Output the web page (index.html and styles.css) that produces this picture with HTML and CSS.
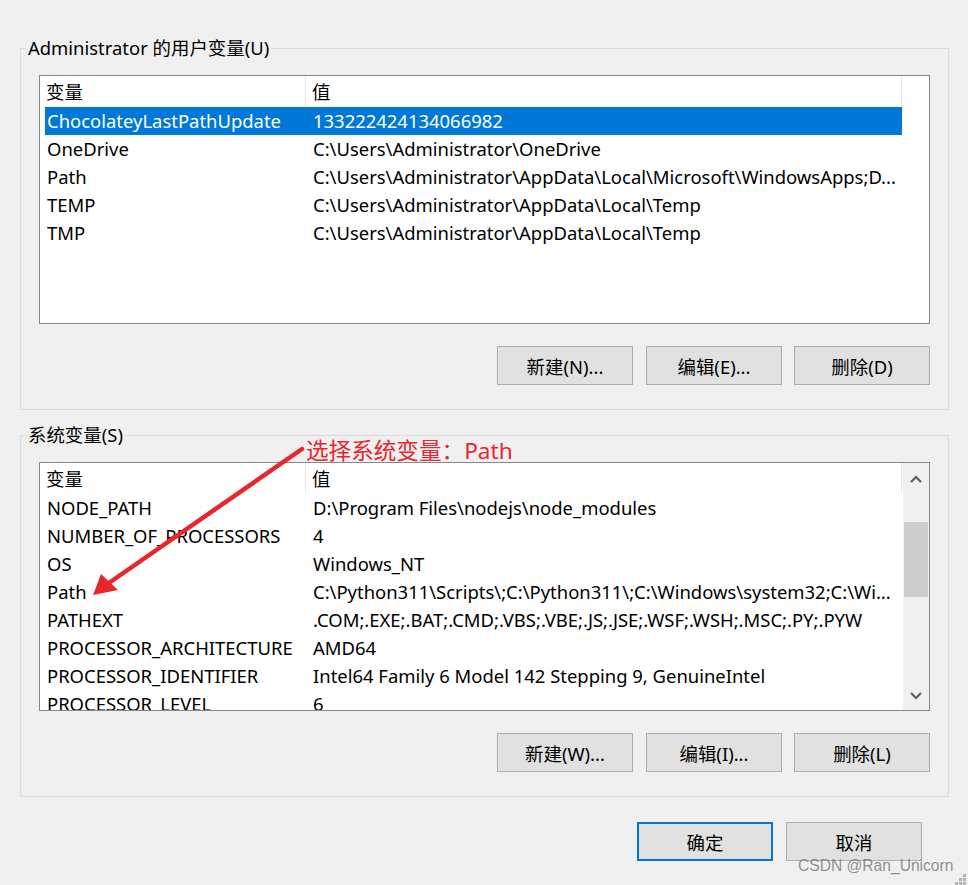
FILE: index.html
```html
<!DOCTYPE html>
<html lang="zh-CN">
<head>
<meta charset="utf-8">
<title>环境变量</title>
<link rel="stylesheet" href="styles.css">
</head>
<body>
<div class="window">
  <section class="group">
    <div class="group-title">Administrator 的用户变量(U)</div>
    <div class="list">
      <div class="list-body">
        <div class="row header"><div class="c1">变量</div><div class="c2">值</div></div>
        <div class="row selected"><div class="c1">ChocolateyLastPathUpdate</div><div class="c2">133222424134066982</div></div>
        <div class="row"><div class="c1">OneDrive</div><div class="c2">C:\Users\Administrator\OneDrive</div></div>
        <div class="row"><div class="c1">Path</div><div class="c2">C:\Users\Administrator\AppData\Local\Microsoft\WindowsApps;D...</div></div>
        <div class="row"><div class="c1">TEMP</div><div class="c2">C:\Users\Administrator\AppData\Local\Temp</div></div>
        <div class="row"><div class="c1">TMP</div><div class="c2">C:\Users\Administrator\AppData\Local\Temp</div></div>
      </div>
    </div>
    <div class="buttons">
      <div class="btn">新建(N)...</div>
      <div class="btn">编辑(E)...</div>
      <div class="btn">删除(D)</div>
    </div>
  </section>

  <section class="group group-sys">
    <div class="group-title">系统变量(S)</div>
    <div class="list">
      <div class="list-body">
        <div class="row header"><div class="c1">变量</div><div class="c2">值</div></div>
        <div class="row"><div class="c1">NODE_PATH</div><div class="c2">D:\Program Files\nodejs\node_modules</div></div>
        <div class="row"><div class="c1">NUMBER_OF_PROCESSORS</div><div class="c2">4</div></div>
        <div class="row"><div class="c1">OS</div><div class="c2">Windows_NT</div></div>
        <div class="row"><div class="c1">Path</div><div class="c2">C:\Python311\Scripts\;C:\Python311\;C:\Windows\system32;C:\Wi...</div></div>
        <div class="row"><div class="c1">PATHEXT</div><div class="c2">.COM;.EXE;.BAT;.CMD;.VBS;.VBE;.JS;.JSE;.WSF;.WSH;.MSC;.PY;.PYW</div></div>
        <div class="row"><div class="c1">PROCESSOR_ARCHITECTURE</div><div class="c2">AMD64</div></div>
        <div class="row"><div class="c1">PROCESSOR_IDENTIFIER</div><div class="c2">Intel64 Family 6 Model 142 Stepping 9, GenuineIntel</div></div>
        <div class="row"><div class="c1">PROCESSOR_LEVEL</div><div class="c2">6</div></div>
      </div>
      <div class="scrollbar">
        <div class="sb-btn sb-up"><svg width="12" height="8" viewBox="0 0 12 8"><path d="M1 7 L6 2 L11 7" fill="none" stroke="#606060" stroke-width="2.2"/></svg></div>
        <div class="sb-track"><div class="sb-thumb"></div></div>
        <div class="sb-btn sb-down"><svg width="12" height="8" viewBox="0 0 12 8"><path d="M1 1 L6 6 L11 1" fill="none" stroke="#606060" stroke-width="2.2"/></svg></div>
      </div>
    </div>
    <div class="buttons">
      <div class="btn">新建(W)...</div>
      <div class="btn">编辑(I)...</div>
      <div class="btn">删除(L)</div>
    </div>
  </section>

  <div class="footer">
    <div class="btn primary">确定</div>
    <div class="btn">取消</div>
  </div>

  <svg class="arrow" width="968" height="885" viewBox="0 0 968 885">
    <line x1="302" y1="449" x2="106" y2="585" stroke="#e8262e" stroke-width="4.5" stroke-linecap="round"/>
    <polygon points="93,595 101,574 118,590" fill="#e8262e"/>
  </svg>
  <div class="annotation">选择系统变量：Path</div>
  <div class="watermark">CSDN @Ran_Unicorn</div>
  <svg class="grip" width="12" height="12" viewBox="0 0 12 12">
    <rect x="8" y="0" width="3" height="3" fill="#b4b4b4"/>
    <rect x="4" y="4" width="3" height="3" fill="#b4b4b4"/>
    <rect x="8" y="4" width="3" height="3" fill="#b4b4b4"/>
    <rect x="0" y="8" width="3" height="3" fill="#b4b4b4"/>
    <rect x="4" y="8" width="3" height="3" fill="#b4b4b4"/>
    <rect x="8" y="8" width="3" height="3" fill="#b4b4b4"/>
  </svg>
</div>
</body>
</html>
```
FILE: styles.css
```css
html, body {
  margin: 0;
  padding: 0;
  background: #f0f0f0;
}
body {
  font-family: "Noto Sans", "Noto Sans CJK SC", sans-serif;
  font-size: 18.45px;
  color: #000;
}
.window {
  position: relative;
  width: 968px;
  height: 885px;
  padding-top: 48px;
  box-sizing: border-box;
  overflow: hidden;
}
.group {
  margin-left: 20px;
  width: 929px;
  box-sizing: border-box;
  border: 1px solid #dcdcdc;
  padding: 0 18px 24px 18px;
}
.group-sys {
  margin-top: 25px;
}
.group-title {
  margin-top: -13px;
  margin-left: -13px;
  height: 24px;
  line-height: 24px;
  padding: 0 2px;
  background: #f0f0f0;
  width: fit-content;
  white-space: nowrap;
}
.list {
  margin-top: 15px;
  height: 249px;
  box-sizing: border-box;
  border: 1px solid #828790;
  background: #fff;
  display: flex;
  overflow: hidden;
}
.list-body {
  flex: 1;
  overflow: hidden;
}
.row {
  display: flex;
  margin-left: 5px;
  width: 857px;
  height: 28px;
  line-height: 28px;
  white-space: nowrap;
}
.row.header {
  height: 30px;
  line-height: 32px;
  margin-bottom: 1px;
}
.row.header .c1 {
  padding-left: 1px;
  border-right: 1px solid #e5e5e5;
}
.row.header .c2 {
  border-right: 1px solid #e5e5e5;
  padding-left: 6px;
}
.c1 {
  width: 261px;
  box-sizing: border-box;
  padding-left: 2px;
  flex: none;
  overflow: hidden;
}
.c2 {
  flex: 1;
  padding-left: 7px;
  overflow: hidden;
}
.row.selected {
  background: #0078d7;
  color: #fff;
}
.scrollbar {
  width: 26px;
  flex: none;
  background: #f0f0f0;
  display: flex;
  flex-direction: column;
}
.sb-btn {
  display: flex;
  align-items: center;
  justify-content: center;
}
.sb-up {
  height: 32px;
}
.sb-down {
  height: 28px;
}
.sb-track {
  flex: 1;
  padding-top: 27px;
}
.sb-thumb {
  margin-left: 1px;
  width: 24px;
  height: 75px;
  background: #cdcdcd;
}
.buttons {
  margin-top: 22px;
  display: flex;
  justify-content: flex-end;
  gap: 12px;
}
.btn {
  width: 136px;
  height: 39px;
  box-sizing: border-box;
  border: 1px solid #adadad;
  background: #e1e1e1;
  display: flex;
  align-items: center;
  justify-content: center;
  white-space: nowrap;
}
.buttons .btn:first-child {
  margin-right: 1px;
}
.footer {
  margin-top: 25px;
  display: flex;
  justify-content: flex-end;
  gap: 13px;
  padding-right: 46px;
}
.btn.primary {
  border: 2px solid #0078d7;
}
.arrow {
  position: absolute;
  left: 0;
  top: 0;
  pointer-events: none;
}
.annotation {
  position: absolute;
  left: 306px;
  top: 436px;
  font-size: 22.6px;
  line-height: 30px;
  color: #e8262e;
  white-space: nowrap;
}
.watermark {
  position: absolute;
  left: 798px;
  top: 857px;
  font-family: "Liberation Sans", "Noto Sans CJK SC", sans-serif;
  font-size: 15.6px;
  line-height: 18px;
  color: rgba(110, 110, 110, 0.75);
  white-space: nowrap;
}
.grip {
  position: absolute;
  left: 955px;
  top: 874px;
}
```
